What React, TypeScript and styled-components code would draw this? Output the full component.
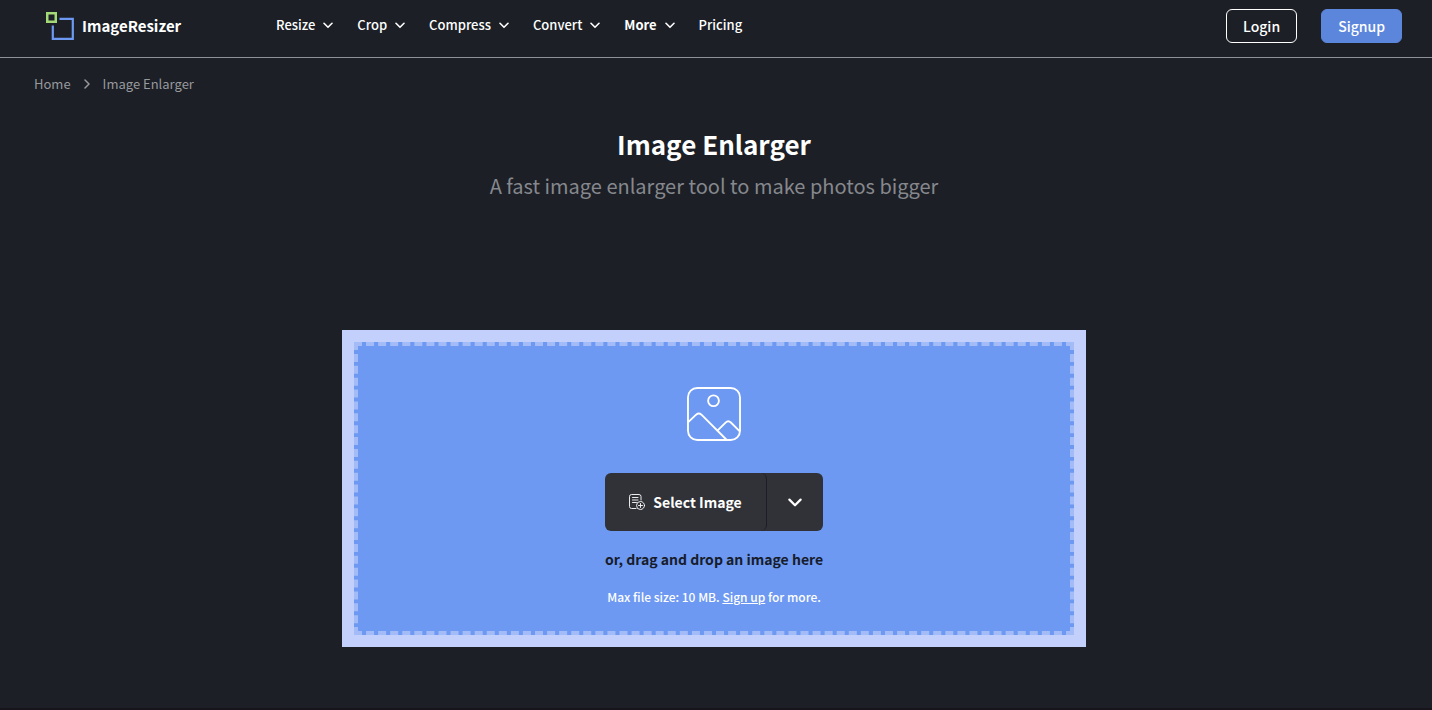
import React from "react";
import styled, { createGlobalStyle } from "styled-components";

const GlobalStyle = createGlobalStyle`
  * { box-sizing: border-box; }
  body {
    margin: 0;
    background: #1c1f26;
    color: #fff;
    font-family: "Noto Sans CJK SC", "Noto Sans", sans-serif;
    font-size: 13px;
  }
  button { font-family: inherit; cursor: pointer; }
  a { color: inherit; text-decoration: none; }
`;

const Page = styled.div`
  min-height: 100vh;
  display: flex;
  flex-direction: column;
`;

const Header = styled.header`
  display: flex;
  align-items: flex-start;
  height: 58px;
  padding: 0 30px 0 46px;
  border-bottom: 1px solid #8f9196;
`;

const Brand = styled.a`
  display: flex;
  align-items: center;
  gap: 8px;
  margin-top: 12px;
  width: 230px;
  font-size: 15px;
  line-height: 28px;
  font-weight: 700;
`;

const Nav = styled.nav`
  display: flex;
  flex: 1;
  gap: 24px;
  padding-top: 14px;
`;

const NavButton = styled.button<{ $strong?: boolean }>`
  display: flex;
  align-items: center;
  gap: 8px;
  padding: 0;
  border: 0;
  background: none;
  color: #fff;
  font-size: 13px;
  line-height: 22px;
  font-weight: ${(p) => (p.$strong ? 700 : 500)};
`;

const NavLink = styled.a`
  font-size: 13px;
  line-height: 22px;
  font-weight: 500;
`;

const Account = styled.div`
  display: flex;
  gap: 24px;
  padding-top: 9px;
`;

const AccountButton = styled.button<{ $filled?: boolean }>`
  height: 34px;
  padding: 0 16px;
  border: 1px solid ${(p) => (p.$filled ? "#5c86dc" : "#fff")};
  border-radius: 6px;
  background: ${(p) => (p.$filled ? "#5c86dc" : "transparent")};
  color: #fff;
  font-size: 14px;
  line-height: 32px;
  font-weight: 500;
`;

const Breadcrumb = styled.nav`
  display: flex;
  align-items: center;
  gap: 11px;
  padding: 16px 34px 0;
  color: #97999d;
  font-size: 13px;
  line-height: 20px;
`;

const Main = styled.main`
  display: flex;
  flex-direction: column;
  align-items: center;
  padding: 32px 4px 60px 0;
`;

const Title = styled.h1`
  margin: 0;
  font-size: 26px;
  line-height: 36px;
  font-weight: 700;
`;

const Subtitle = styled.p`
  margin: 8px 0 128px;
  color: #86888d;
  font-size: 20px;
  line-height: 32px;
`;

const DropFrame = styled.section`
  width: 100%;
  max-width: 744px;
  padding: 12px;
  background: #c2d0fb;
`;

const DropZone = styled.div`
  display: flex;
  flex-direction: column;
  align-items: center;
  padding: 41px 20px 24px;
  border: 4px dashed #a3bcf7;
  background: #6d99f2;
`;

const SplitButton = styled.div`
  display: flex;
  margin-top: 32px;
  height: 58px;
  border-radius: 6px;
  overflow: hidden;
  background: #303237;
`;

const SelectButton = styled.button`
  display: flex;
  align-items: center;
  gap: 8px;
  padding: 0 24px;
  border: 0;
  border-right: 1px solid #1c1f26;
  border-radius: 0 6px 6px 0;
  background: none;
  color: #fff;
  font-size: 14px;
  font-weight: 700;
`;

const MenuButton = styled.button`
  display: flex;
  align-items: center;
  justify-content: center;
  width: 56px;
  padding: 0;
  border: 0;
  background: none;
  color: #fff;
`;

const DropHint = styled.p`
  margin: 16px 0 0;
  color: #171c2b;
  font-size: 14px;
  line-height: 24px;
  font-weight: 700;
`;

const SizeHint = styled.p`
  margin: 16px 0 0;
  font-size: 12px;
  line-height: 20px;
  font-weight: 500;
  a { text-decoration: underline; }
`;

const Footer = styled.footer`
  height: 2px;
  margin-top: auto;
  background: #17141c;
`;

const Chevron = ({ size = 10, stroke = 1.6 }: { size?: number; stroke?: number }) => (
  <svg width={size} height={size} viewBox="0 0 10 10" fill="none" stroke="currentColor" strokeWidth={stroke} strokeLinecap="round" strokeLinejoin="round" aria-hidden="true">
    <path d="M1 3.300l4 4 4-4" />
  </svg>
);

const Logo = () => (
  <svg width="28" height="28" viewBox="0 0 28 28" fill="none" aria-hidden="true">
    <path d="M13.500 6.800H26.800V26.800H6.800V13.500" stroke="#6d99f2" strokeWidth="2.200" />
    <rect x="1.25" y="1.25" width="8.5" height="8.5" stroke="#a3d977" strokeWidth="2.5" />
  </svg>
);

const PictureIcon = () => (
  <svg width="54" height="54" viewBox="0 0 55 55" fill="none" stroke="#fff" strokeWidth="1.9" aria-hidden="true">
    <rect x="1" y="1" width="53" height="53" rx="9.5" />
    <circle cx="27" cy="14" r="5.5" />
    <path d="M1 36L9.3 28.2Q12 25.8 14.700 28.2L40.500 54M31 44.500L39.300 36.200Q42 33.600 44.700 36.200L54 45.500" />
  </svg>
);

const AddFileIcon = () => (
  <svg width="16" height="16" viewBox="0 0 16 16" fill="none" stroke="#fff" strokeWidth="0.9" strokeLinecap="round" aria-hidden="true">
    <path d="M7 14.500H2.500a2 2 0 0 1-2-2V2.500a2 2 0 0 1 2-2H10a2 2 0 0 1 2 2V6M3.500 3.500h5.500M3.500 6h5.500M3.500 8.500h4" />
    <circle cx="11.500" cy="11.500" r="4" />
    <path d="M11.500 9.500v4M9.500 11.500h4" />
  </svg>
);

const menus = ["Resize", "Crop", "Compress", "Convert", "More"];

export default function App() {
  return (
    <Page>
      <GlobalStyle />
      <Header>
        <Brand href="#">
          <Logo />
          ImageResizer
        </Brand>
        <Nav aria-label="Main">
          {menus.map((name) => (
            <NavButton key={name} type="button" $strong={name === "More"}>
              {name}
              <Chevron />
            </NavButton>
          ))}
          <NavLink href="#pricing">Pricing</NavLink>
        </Nav>
        <Account>
          <AccountButton type="button">Login</AccountButton>
          <AccountButton type="button" $filled>Signup</AccountButton>
        </Account>
      </Header>
      <Breadcrumb aria-label="Breadcrumb">
        <a href="#home">Home</a>
        <svg width="10" height="10" viewBox="0 0 10 10" fill="none" stroke="currentColor" strokeWidth="1.5" strokeLinecap="round" strokeLinejoin="round" aria-hidden="true">
          <path d="M3 1l4 4-4 4" />
        </svg>
        <a href="#enlarger">Image Enlarger</a>
      </Breadcrumb>
      <Main>
        <Title>Image Enlarger</Title>
        <Subtitle>A fast image enlarger tool to make photos bigger</Subtitle>
        <DropFrame>
          <DropZone>
            <PictureIcon />
            <SplitButton>
              <SelectButton type="button">
                <AddFileIcon />
                Select Image
              </SelectButton>
              <MenuButton type="button" aria-label="More sources">
                <Chevron size={14} />
              </MenuButton>
            </SplitButton>
            <DropHint>or, drag and drop an image here</DropHint>
            <SizeHint>
              Max file size: 10 MB. <a href="#signup">Sign up</a> for more.
            </SizeHint>
          </DropZone>
        </DropFrame>
      </Main>
      <Footer />
    </Page>
  );
}
